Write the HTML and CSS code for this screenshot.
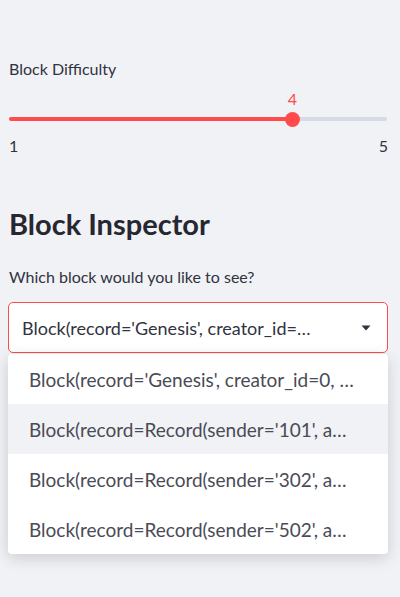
FILE: index.html
```html
<!DOCTYPE html>
<html>
<head>
<meta charset="utf-8">
<link rel="stylesheet" href="styles.css">
</head>
<body>
<main class="main">
  <section class="slider-block">
    <div class="label">Block Difficulty</div>
    <div class="slider">
      <div class="track">
        <div class="fill" style="width: 75%"></div>
        <div class="thumb" style="left: 75%">
          <span class="thumb-value">4</span>
        </div>
      </div>
    </div>
    <div class="ticks"><span>1</span><span>5</span></div>
  </section>

  <h2 class="heading">Block Inspector</h2>

  <section class="select-block">
    <div class="label">Which block would you like to see?</div>
    <div class="select-wrap">
      <div class="select">
        <span class="select-text">Block(record='Genesis', creator_id=…</span>
        <svg class="caret" width="12" height="8" viewBox="0 0 12 8"><path d="M1.5 1.5h9L6 6.5z" fill="#31333f"/></svg>
      </div>
      <ul class="menu">
        <li class="option">Block(record='Genesis', creator_id=0, …</li>
        <li class="option active">Block(record=Record(sender='101', a…</li>
        <li class="option">Block(record=Record(sender='302', a…</li>
        <li class="option">Block(record=Record(sender='502', a…</li>
      </ul>
    </div>
  </section>
</main>
</body>
</html>
```

FILE: styles.css
```css
* { box-sizing: border-box; }
html, body {
  margin: 0;
  padding: 0;
  background: #f0f2f6;
  font-family: "Lato", "Source Sans Pro", sans-serif;
  color: #31333f;
}
.main {
  min-height: 597px;
  padding: 58px 12px 0 8px;
}
.label {
  font-size: 16px;
  line-height: 22px;
  padding-left: 1px;
}
.slider-block .label {
  margin-bottom: 16px;
}
.slider {
  height: 33px;
  display: flex;
  align-items: flex-end;
  padding: 0 1px 0 1px;
}
.track {
  position: relative;
  width: 100%;
  height: 4px;
  border-radius: 2px;
  background: #d5dae4;
  margin-bottom: 8px;
}
.fill {
  height: 100%;
  background: #ff4b4b;
  border-radius: 2px;
}
.thumb {
  position: absolute;
  top: 50%;
  width: 15px;
  height: 15px;
  margin: -7.5px 0 0 -7.5px;
  border-radius: 50%;
  background: #ff4b4b;
}
.thumb-value {
  position: absolute;
  bottom: 20px;
  left: 50%;
  transform: translateX(-50%);
  color: #ff4b4b;
  font-size: 16px;
  line-height: 16px;
}
.ticks {
  display: flex;
  justify-content: space-between;
  font-size: 16px;
  line-height: 18px;
  padding: 8px 0 0 1px;
}
.heading {
  margin: 51px 0 0 0;
  padding-left: 1px;
  font-size: 29px;
  font-weight: 700;
  line-height: 36px;
  color: #262730;
}
.select-block {
  margin-top: 24px;
}
.select-block .label {
  margin-bottom: 14px;
}
.select-wrap {
  position: relative;
}
.select {
  height: 51px;
  background: #fff;
  border: 1px solid #ff4b4b;
  border-radius: 5px;
  display: flex;
  align-items: center;
  justify-content: space-between;
  padding: 0 15px 0 13px;
  font-size: 18px;
}
.select-text {
  white-space: nowrap;
}
.caret { display: block; }
.menu {
  position: absolute;
  top: 52px;
  left: 0;
  right: 0;
  list-style: none;
  margin: 0;
  padding: 0;
  background: #fff;
  border-radius: 4px;
  box-shadow: 0 4px 16px rgba(0,0,0,0.16);
  overflow: hidden;
  z-index: 2;
}
.option {
  height: 50px;
  display: flex;
  align-items: center;
  padding-left: 21px;
  font-size: 19px;
  color: #4a4b55;
  white-space: nowrap;
}
.option.active {
  background: #f0f2f6;
}
```
